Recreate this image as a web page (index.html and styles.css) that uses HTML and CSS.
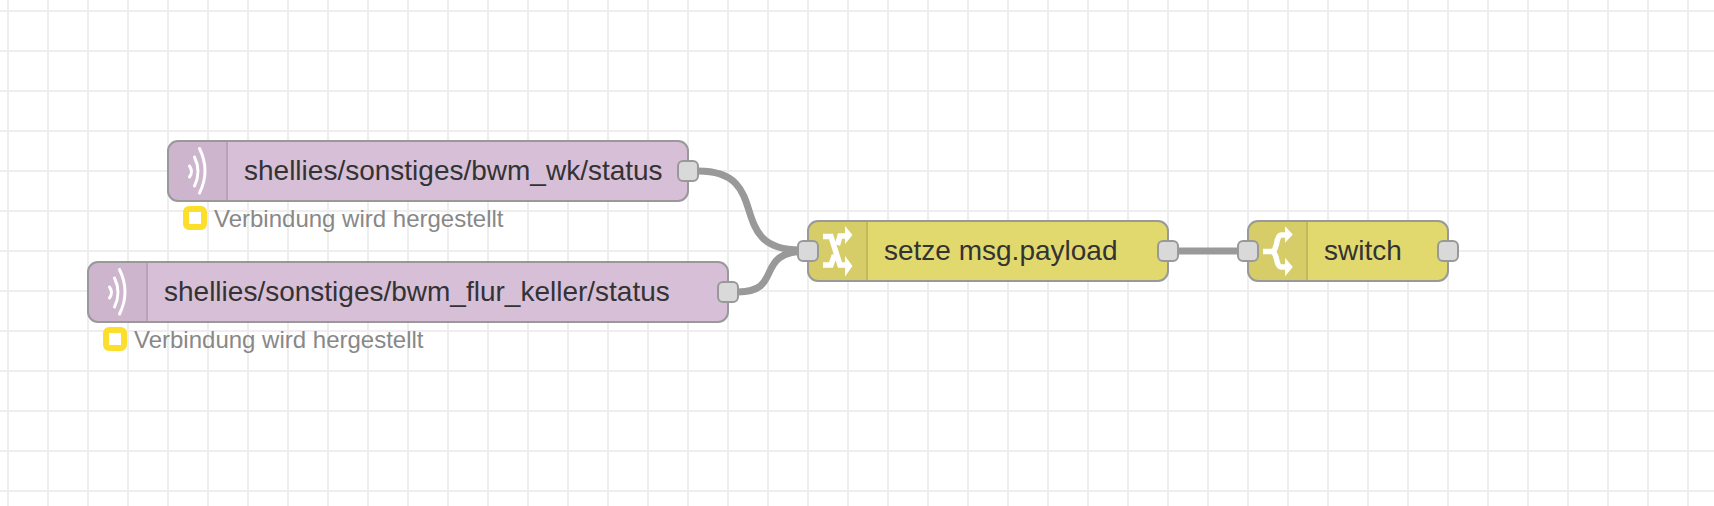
FILE: index.html
```html
<!DOCTYPE html>
<html lang="de">
<head>
<meta charset="utf-8">
<title>Flow</title>
<link rel="stylesheet" href="styles.css">
</head>
<body>
<main class="canvas">
  <svg class="wires" width="1714" height="506" viewBox="0 0 1714 506">
    <path d="M698 171 C775 171 723 250 800 250 H808"/>
    <path d="M738 292 C785 292 752 251 808 251"/>
    <path d="M1178 251 L1248 251"/>
  </svg>

  <div class="node mqtt node-a">
    <span class="icon">
      <svg width="24" height="50" viewBox="0 0 24 50"><path d="M3.500 20 Q7.500 25.500 3.500 31M8.500 11 Q15.500 25.500 8.500 40M13.500 2.500 Q24.500 25 13.500 47"/></svg>
    </span>
    <span class="label">shellies/sonstiges/bwm_wk/status</span>
    <span class="port out"></span>
  </div>
  <div class="status status-a"><span class="dot"></span><span class="status-text">Verbindung wird hergestellt</span></div>

  <div class="node mqtt node-b">
    <span class="icon">
      <svg width="24" height="50" viewBox="0 0 24 50"><path d="M3.500 20 Q7.500 25.500 3.500 31M8.500 11 Q15.500 25.500 8.500 40M13.500 2.500 Q24.500 25 13.500 47"/></svg>
    </span>
    <span class="label">shellies/sonstiges/bwm_flur_keller/status</span>
    <span class="port out"></span>
  </div>
  <div class="status status-b"><span class="dot"></span><span class="status-text">Verbindung wird hergestellt</span></div>

  <div class="node logic node-c">
    <span class="port in"></span>
    <span class="icon">
      <svg width="36" height="52" viewBox="0 0 36 52"><path class="thick" d="M3 11.500 H11 L20 40 H27M3 40 H11 L14.500 30M17.500 20 L20 11 H27"/><path class="fill" d="M25 1 L32.500 10 L25 19 ZM25 31 L32.500 41 L25 51.500 Z"/></svg>
    </span>
    <span class="label">setze msg.payload</span>
    <span class="port out"></span>
  </div>

  <div class="node logic node-d">
    <span class="port in"></span>
    <span class="icon">
      <svg width="36" height="52" viewBox="0 0 36 52"><path class="thick" d="M3 26.500 H14"/><path class="thick" d="M13 26.500 Q15.500 24 16.500 19 Q18 10 21 10 H27M13 26.500 Q15.500 29 16.500 34 Q18 42 21 42 H27"/><path class="fill" d="M25 1.300 L32.800 9.500 L25 17.700 ZM25 32.700 L32.800 42 L25 51.300 Z"/></svg>
    </span>
    <span class="label">switch</span>
    <span class="port out"></span>
  </div>
</main>
</body>
</html>
```

FILE: styles.css
```css
* { box-sizing: border-box; }
html, body { margin: 0; padding: 0; }
body { width: 1714px; height: 506px; overflow: hidden; background: #fff; font-family: "Liberation Sans", Arial, sans-serif; }

.canvas {
  position: relative;
  width: 1714px;
  height: 506px;
  background-color: #fff;
  background-image:
    linear-gradient(to right, #eee 2px, transparent 2px),
    linear-gradient(to bottom, #eee 2px, transparent 2px);
  background-size: 40px 40px;
  background-position: 7px 10px;
}

.wires { position: absolute; left: 0; top: 0; }
.wires path { fill: none; stroke: #999; stroke-width: 7px; }

.node {
  position: absolute;
  display: flex;
  align-items: stretch;
  height: 62px;
  border: 2px solid #999;
  border-radius: 11px;
  color: #333;
}
.mqtt { background: #d8bfd8; }
.logic { background: #e2d96e; }

.node-a { left: 167px; top: 140px; width: 522px; }
.node-b { left: 87px; top: 261px; width: 642px; }
.node-c { left: 807px; top: 220px; width: 362px; }
.node-d { left: 1247px; top: 220px; width: 202px; }

.icon {
  flex: none;
  width: 59px;
  display: flex;
  align-items: center;
  justify-content: center;
  background: rgba(0, 0, 0, 0.05);
  border-right: 2px solid rgba(0, 0, 0, 0.1);
  border-radius: 9px 0 0 9px;
}
.icon svg { display: block; overflow: visible; }
.icon path { fill: none; stroke: #fff; stroke-width: 3px; stroke-linecap: round; }
.icon path.thick { stroke-width: 5.500px; stroke-linecap: butt; stroke-linejoin: miter; }
.icon path.fill { fill: #fff; stroke: none; }

.label {
  padding-left: 16px;
  font-size: 28px;
  line-height: 58px;
  white-space: nowrap;
}

.port {
  position: absolute;
  top: 18px;
  width: 22px;
  height: 22px;
  background: #d9d9d9;
  border: 2px solid #999;
  border-radius: 6px;
}
.port.out { right: -12px; }
.port.in { left: -12px; }

.status {
  position: absolute;
  display: flex;
  align-items: center;
  gap: 7px;
  height: 24px;
  font-size: 24px;
  color: #888;
  white-space: nowrap;
}
.status-a { left: 183px; top: 206px; }
.status-b { left: 103px; top: 327px; }
.status-text { margin-top: 2px; }
.dot {
  flex: none;
  width: 24px;
  height: 24px;
  background: #fff;
  border: 6px solid #fbdf2c;
  border-radius: 6px;
}
```
